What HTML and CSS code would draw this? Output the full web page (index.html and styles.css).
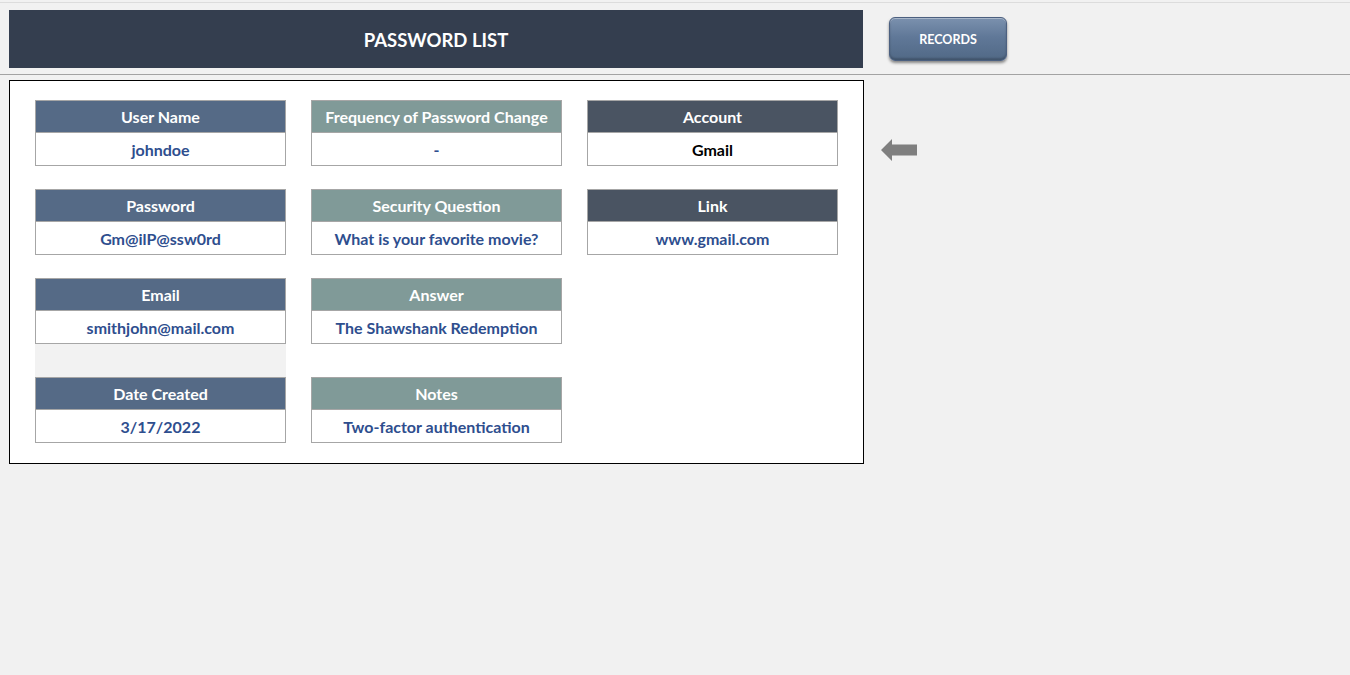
FILE: index.html
```html
<!DOCTYPE html>
<html>
<head>
<meta charset="utf-8">
<link rel="stylesheet" href="styles.css">
</head>
<body>
<div class="page">
  <div class="top-row">
    <div class="title-bar">PASSWORD LIST</div>
    <div class="records-btn">RECORDS</div>
  </div>
  <div class="separator"></div>
  <div class="main-row">
    <div class="card">
      <div class="col">
        <div class="field c1"><div class="fh">User Name</div><div class="fv">johndoe</div></div>
        <div class="field c1"><div class="fh">Password</div><div class="fv">Gm@ilP@ssw0rd</div></div>
        <div class="field c1 tight"><div class="fh">Email</div><div class="fv">smithjohn@mail.com</div></div>
        <div class="spacer gray"></div>
        <div class="field c1 tight"><div class="fh">Date Created</div><div class="fv">3/17/2022</div></div>
      </div>
      <div class="col">
        <div class="field c2"><div class="fh">Frequency of Password Change</div><div class="fv">-</div></div>
        <div class="field c2"><div class="fh">Security Question</div><div class="fv">What is your favorite movie?</div></div>
        <div class="field c2 tight"><div class="fh">Answer</div><div class="fv">The Shawshank Redemption</div></div>
        <div class="spacer"></div>
        <div class="field c2 tight"><div class="fh">Notes</div><div class="fv">Two-factor authentication</div></div>
      </div>
      <div class="col">
        <div class="field c3"><div class="fh">Account</div><div class="fv black">Gmail</div></div>
        <div class="field c3 tight"><div class="fh">Link</div><div class="fv">www.gmail.com</div></div>
      </div>
    </div>
    <svg class="arrow" width="36" height="22" viewBox="0 0 36 22">
      <polygon points="0,11 11,0 11,5.5 36,5.5 36,16.5 11,16.5 11,22" fill="#7f7f7f"/>
    </svg>
  </div>
</div>
</body>
</html>
```
FILE: styles.css
```css
* { box-sizing: border-box; }
html, body { margin: 0; padding: 0; }
body {
  background: #f1f1f1;
  font-family: Lato, "Open Sans", "Liberation Sans", sans-serif;
  width: 1350px;
  height: 675px;
  overflow: hidden;
}
.page {
  margin-top: 2px;
  border-top: 1px solid #dcdcdc;
}
.top-row {
  display: flex;
  align-items: flex-start;
  margin-top: 7px;
  padding-left: 9px;
}
.title-bar {
  width: 854px;
  height: 58px;
  background: #343e4f;
  color: #ffffff;
  font-weight: 700;
  font-size: 18.5px;
  display: flex;
  align-items: center;
  justify-content: center;
  padding-top: 1px;
}
.records-btn {
  margin-left: 26px;
  margin-top: 7px;
  width: 118px;
  height: 44px;
  border-radius: 6px;
  background: linear-gradient(180deg, #7b91ae 0%, #607898 45%, #516986 100%);
  box-shadow: inset 0 1px 0 rgba(255,255,255,0.35), inset 0 -2px 2px rgba(0,0,0,0.2), 0 2px 3px rgba(0,0,0,0.45);
  border: 1px solid #4c6080;
  color: #ffffff;
  font-weight: 700;
  font-size: 12.5px;
  display: flex;
  align-items: center;
  justify-content: center;
}
.separator {
  margin-top: 6px;
  height: 1px;
  background: #a3a3a3;
}
.main-row {
  display: flex;
  align-items: flex-start;
  margin-top: 5px;
  padding-left: 9px;
}
.card {
  width: 855px;
  height: 384px;
  background: #ffffff;
  border: 1px solid #000000;
  display: flex;
  gap: 25px;
  padding: 19px 0 0 25px;
}
.col {
  width: 251px;
  display: flex;
  flex-direction: column;
}
.field {
  flex-shrink: 0;
  width: 251px;
  margin-bottom: 23px;
  border: 1px solid #a6a6a6;
}
.field.tight { margin-bottom: 0; }
.spacer { height: 33px; flex-shrink: 0; }
.spacer.gray { background: #f2f2f2; }
.fh {
  height: 32px;
  display: flex;
  align-items: center;
  justify-content: center;
  color: #ffffff;
  font-weight: 700;
  font-size: 16px;
  border-bottom: 1px solid #a6a6a6;
}
.c1 .fh { background: #556a86; }
.c2 .fh { background: #809a98; }
.c3 .fh { background: #4a5462; }
.fv {
  height: 32px;
  display: flex;
  align-items: center;
  justify-content: center;
  background: #ffffff;
  color: #2e4e8e;
  font-weight: 700;
  font-size: 16px;
  padding-top: 1px;
}
.fv.black { color: #000000; }
.arrow {
  margin-left: 17px;
  margin-top: 59px;
}
```
